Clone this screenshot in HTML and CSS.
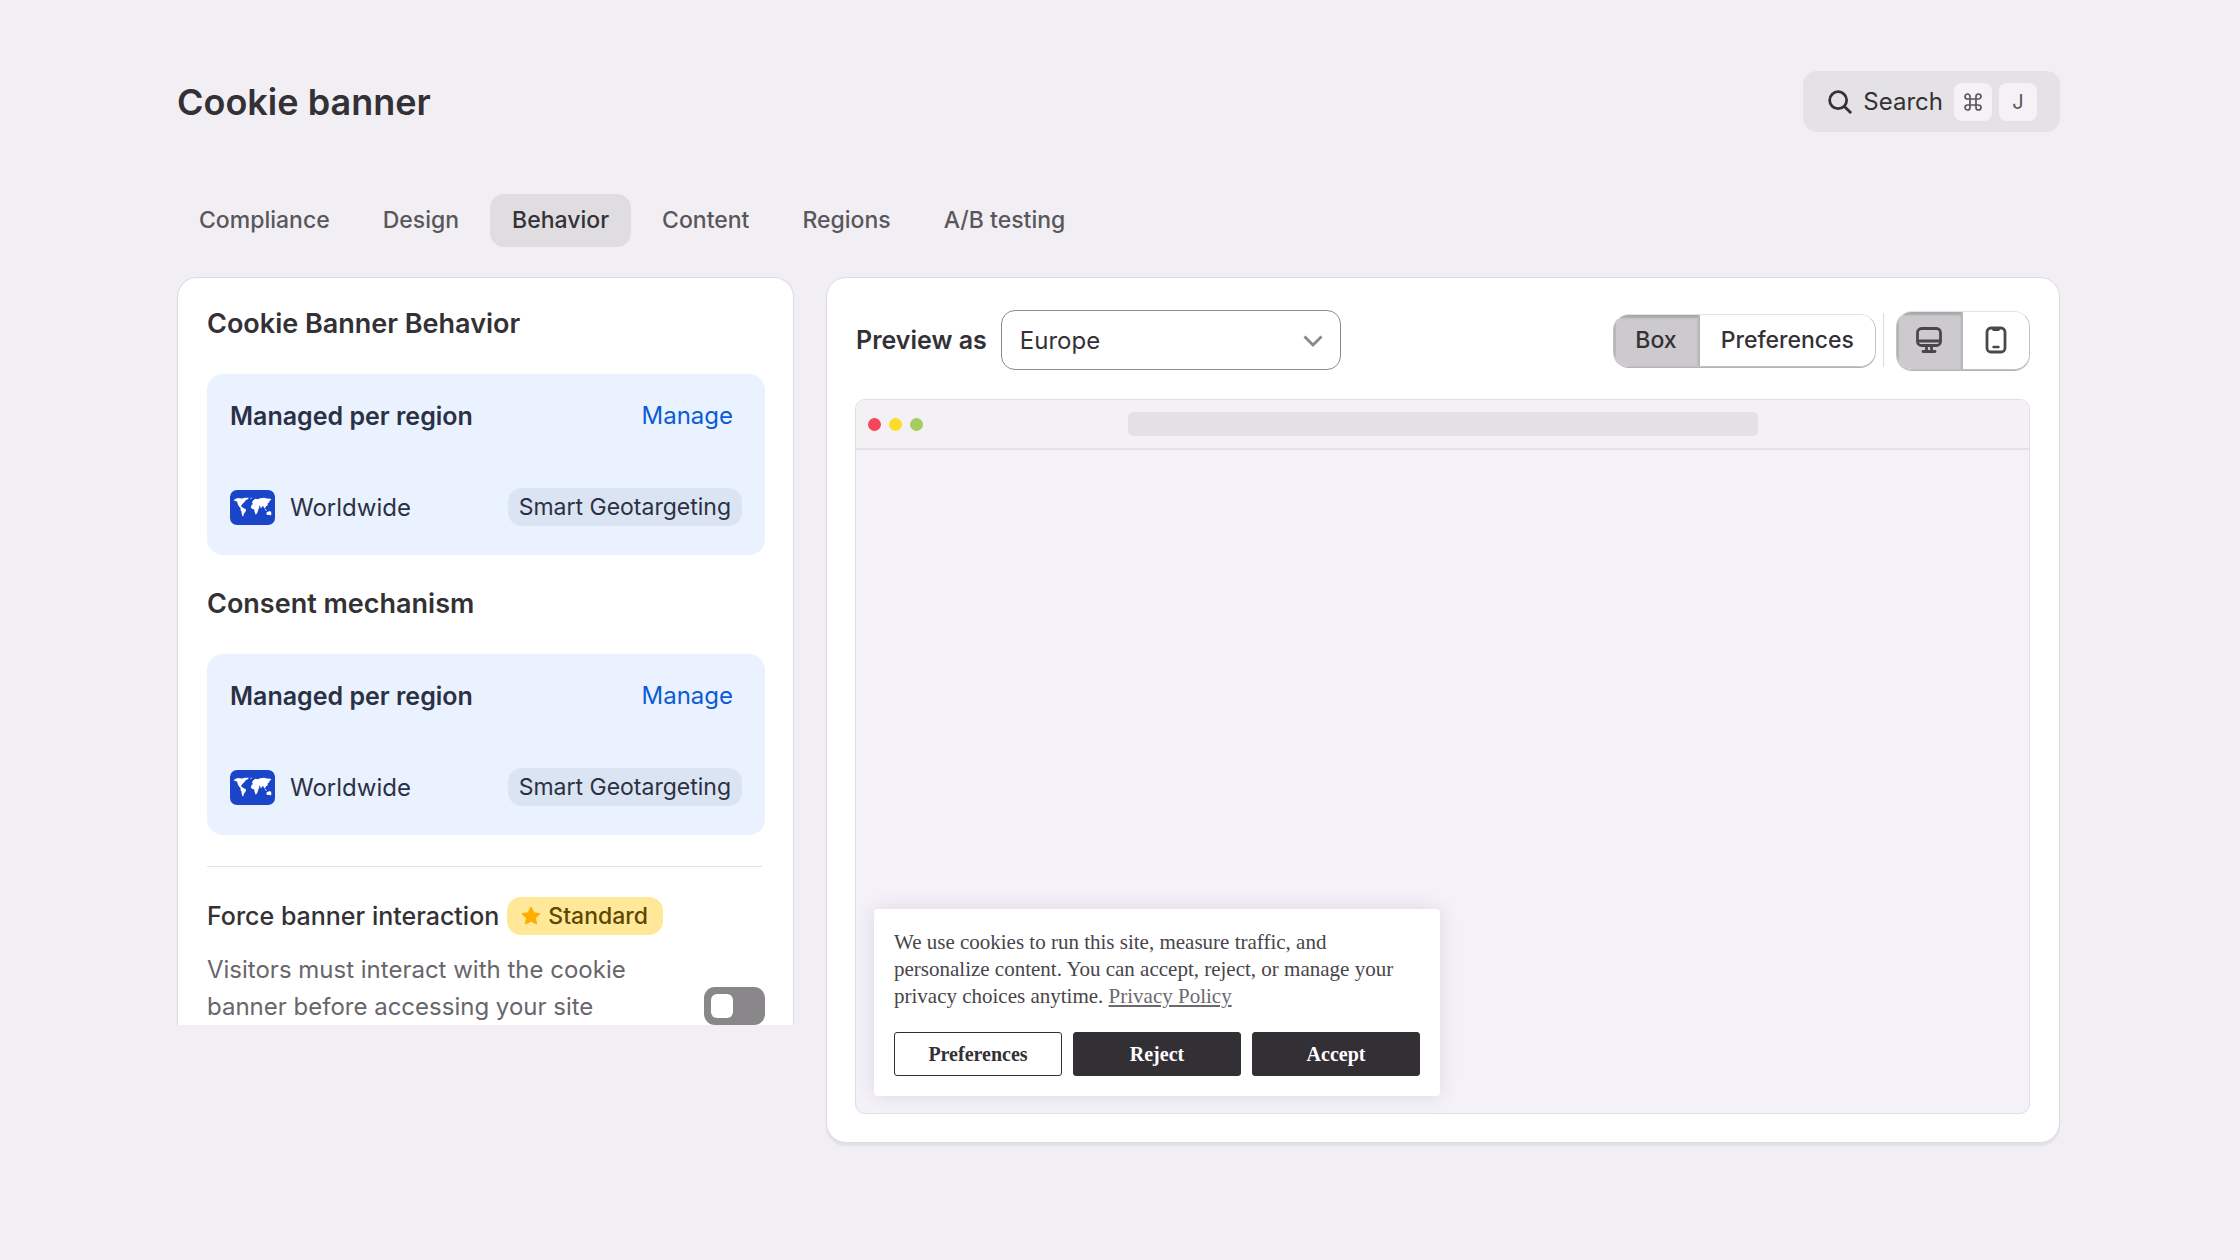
FILE: index.html
```html
<!DOCTYPE html>
<html lang="en">
<head>
	<meta charset="UTF-8">
	<meta name="viewport" content="width=device-width, initial-scale=1.0">
	<title>Cookie banner</title>
	<link rel="stylesheet" href="styles.css">
</head>
<body>
	<!-- shared world map flag -->
	<svg width="0" height="0" class="sprite" aria-hidden="true">
		<symbol id="world" viewBox="0 0 45 35">
			<rect width="45" height="35" rx="7" fill="#1b45c8"/>
			<path fill="#fff" d="M5 9l3-1 4 .4 3-.6 4 0-1.500 1.600-1.700.6-.8 1.500-1.600 1.600-1.500 1.700-.9 1.300.9 1 1.600 1 2.600 1.400-.6 2.200-1.500 1.800-.6 2.400-.8.7-.8-2.600-.3-2.400-1-1.700.1-1.800-1.600-1.500-1.200-2.400-.6-2.200-1.700-1.200-1.800.3z"/>
			<path fill="#fff" d="M22 12.500l1.200-2.200 2.300-1.500 2.500.5 2-1 4-.5 3 .6 3.500.3.800 1.300-1.800.8-.4 1.800-1.300.7-.3 2.200-1.700 1-.8 2.300-1.200-1.500-.8-1.600-1.200 1.600-.8 1.300-1-2.600-1.400-.3.900 1.600-1 1.800-.7 2.300-1 2.300-1.300.8-.9-2.600-.4-2.600-2.200-.4-1.100-1.800.7-2 1.300-1.200z"/>
			<path fill="#fff" d="M36.500 22.500l2-.9 1.700-.7 1 1.500.3 1.700-1 1.300-1.800-.7-2 .2zM35 19l2 1.300-.6.5-1.600-1zM20 8l2-.3-.7 1.300z"/>
		</symbol>
	</svg>

	<div class="page">
		<header class="header">
			<h1>Cookie banner</h1>
			<button class="search" type="button">
				<svg class="search-icon" viewBox="0 0 26 26" fill="none" stroke="#333136" stroke-width="3">
					<circle cx="11" cy="11" r="9.200"/>
					<path d="M17.500 17.500L25 25"/>
				</svg>
				Search
				<span class="keys">
					<kbd>
						<svg viewBox="0 0 18 18" width="18" height="18" fill="none" stroke="#59575c" stroke-width="1.700">
							<path d="M6 6h6v6H6zM6 6H3.500A2.500 2.500 0 1 1 6 3.500zM12 6V3.500A2.500 2.500 0 1 1 14.500 6zM12 12h2.500a2.500 2.500 0 1 1-2.500 2.500zM6 12v2.500A2.500 2.500 0 1 1 3.500 12z"/>
						</svg>
					</kbd>
					<kbd>J</kbd>
				</span>
			</button>
		</header>

		<nav class="tabs">
			<a href="#" class="tab">Compliance</a>
			<a href="#" class="tab">Design</a>
			<a href="#" class="tab active">Behavior</a>
			<a href="#" class="tab">Content</a>
			<a href="#" class="tab">Regions</a>
			<a href="#" class="tab">A/B testing</a>
		</nav>

		<main class="columns">
			<section class="panel settings">
				<h2>Cookie Banner Behavior</h2>
				<div class="region-card">
					<div class="row">
						<h3>Managed per region</h3>
						<a href="#" class="manage">Manage</a>
					</div>
					<div class="row">
						<svg class="flag"><use href="#world"/></svg>
						<span class="region">Worldwide</span>
						<span class="chip">Smart Geotargeting</span>
					</div>
				</div>

				<h2>Consent mechanism</h2>
				<div class="region-card">
					<div class="row">
						<h3>Managed per region</h3>
						<a href="#" class="manage">Manage</a>
					</div>
					<div class="row">
						<svg class="flag"><use href="#world"/></svg>
						<span class="region">Worldwide</span>
						<span class="chip">Smart Geotargeting</span>
					</div>
				</div>

				<hr>

				<div class="force-title">
					<label for="force">Force banner interaction</label>
					<span class="plan">
						<svg viewBox="0 0 20 20" width="20" height="20" fill="#ffae00" stroke="#ffae00" stroke-width="1.500" stroke-linejoin="round">
							<path d="M10 1.500l2.600 5.400 5.900.8-4.300 4.100 1.100 5.900L10 14.800l-5.300 2.900 1.100-5.900L1.500 7.700l5.900-.8z"/>
						</svg>
						Standard
					</span>
				</div>
				<div class="force-body">
					<p>Visitors must interact with the cookie banner before accessing your site</p>
					<input type="checkbox" id="force" class="toggle">
				</div>
			</section>

			<section class="panel preview">
				<div class="toolbar">
					<label for="previewAs">Preview as</label>
					<div class="select">
						<select id="previewAs">
							<option>Europe</option>
							<option>Worldwide</option>
						</select>
						<svg class="chevron" viewBox="0 0 20 12" fill="none" stroke="#88868b" stroke-width="2.800">
							<path d="M1.500 1.500L10 10l8.500-8.500"/>
						</svg>
					</div>
					<div class="segmented views">
						<button type="button" class="on">Box</button>
						<button type="button">Preferences</button>
					</div>
					<span class="divider"></span>
					<div class="segmented devices">
						<button type="button" class="on" aria-label="Desktop">
							<svg viewBox="0 0 26 28" width="26" height="28" fill="none" stroke="#49474c" stroke-width="2.800" stroke-linecap="round">
								<rect x="1.500" y="2.500" width="23" height="17" rx="4"/>
								<path d="M2 15h22M10.500 20v5M15.500 20v5M7 25.500h12"/>
							</svg>
						</button>
						<button type="button" aria-label="Mobile">
							<svg viewBox="0 0 26 28" width="26" height="28" fill="none" stroke="#49474c" stroke-width="2.800" stroke-linecap="round">
								<rect x="4" y="2" width="18" height="24" rx="4"/>
								<path d="M10.500 3.500h5"/>
								<path d="M10.500 21h5" stroke-width="2.400"/>
							</svg>
						</button>
					</div>
				</div>

				<div class="browser">
					<div class="browser-bar">
						<div class="dots"><i class="red"></i><i class="yellow"></i><i class="green"></i></div>
						<div class="address"></div>
					</div>
					<div class="viewport">
						<div class="consent">
							<p>We use cookies to run this site, measure traffic, and personalize content. You can accept, reject, or manage your privacy choices anytime. <a href="#">Privacy Policy</a></p>
							<div class="consent-actions">
								<button type="button" class="outline">Preferences</button>
								<button type="button">Reject</button>
								<button type="button">Accept</button>
							</div>
						</div>
					</div>
				</div>
			</section>
		</main>
	</div>
</body>
</html>
```
FILE: styles.css
```css
* {
	margin: 0;
	padding: 0;
	box-sizing: border-box;
}

body {
	font-family: Inter, "Liberation Sans", sans-serif;
	font-size: 24px;
	color: #333136;
	background: #f1eff3;
}

button,
select {
	font: inherit;
	color: inherit;
}

a {
	text-decoration: none;
}

.sprite {
	position: absolute;
}

.page {
	padding: 71px 180px 71px 177px;
}

/* header */
.header {
	display: flex;
	justify-content: space-between;
	align-items: center;
	margin-bottom: 62px;
}

h1 {
	font-size: 36px;
	line-height: 44px;
	font-weight: 600;
}

.search {
	display: flex;
	align-items: center;
	gap: 11px;
	height: 61px;
	padding: 0 23px 0 25px;
	border: none;
	border-radius: 14px;
	background: #e4e2e5;
}

.search-icon {
	width: 24px;
	height: 24px;
}

.keys {
	display: flex;
	gap: 7px;
}

kbd {
	display: flex;
	align-items: center;
	justify-content: center;
	width: 38px;
	height: 38px;
	border-radius: 8px;
	background: #f4f2f5;
	color: #59575c;
	font-family: inherit;
	font-size: 20px;
}

/* tabs */
.tabs {
	display: flex;
	gap: 9px;
	margin-bottom: 30px;
}

.tab {
	padding: 0 22px;
	border-radius: 14px;
	font-size: 23px;
	line-height: 53px;
	font-weight: 500;
	color: #59575c;
}

.tab.active {
	background: #dfdde0;
	color: #333136;
}

/* panels */
.columns {
	display: grid;
	grid-template-columns: 1fr 2fr;
	gap: 32px;
	align-items: start;
}

.panel {
	background: #fff;
	border: 1px solid #dddbe0;
	border-radius: 20px;
}

.settings {
	padding: 28px 28px 0 29px;
	border-bottom: none;
	border-radius: 20px 20px 0 0;
}

h2 {
	font-size: 27px;
	line-height: 36px;
	font-weight: 600;
}

.region-card {
	margin: 32px 0 31px;
	padding: 24px 23px 29px;
	border-radius: 16px;
	background: #eaf2ff;
	color: #2b3145;
}

.row {
	display: flex;
	align-items: center;
	justify-content: space-between;
}

.row + .row {
	margin-top: 54px;
}

h3 {
	font-size: 25px;
	line-height: 36px;
	font-weight: 600;
}

.manage {
	padding: 0 9px;
	line-height: 36px;
	color: #0b5cd5;
}

.flag {
	width: 45px;
	height: 35px;
}

.region {
	flex: 1;
	padding-left: 15px;
}

.chip {
	padding: 0 11px;
	border-radius: 14px;
	background: #dbe4f2;
	font-size: 23px;
	line-height: 38px;
}

hr {
	margin: 31px 3px 30px 0;
	border: none;
	border-top: 1px solid #e4e2e5;
}

.force-title {
	display: flex;
	align-items: center;
	gap: 8px;
	margin-bottom: 16px;
	font-size: 25px;
	font-weight: 500;
}

.plan {
	display: flex;
	align-items: center;
	gap: 7px;
	padding: 0 15px 0 14px;
	border-radius: 14px;
	background: #ffe998;
	color: #5e4700;
	font-size: 23px;
	line-height: 38px;
}

.force-body {
	display: flex;
	align-items: flex-end;
	justify-content: space-between;
	gap: 60px;
	color: #68666b;
	line-height: 37px;
}

.toggle {
	appearance: none;
	flex: none;
	display: flex;
	width: 61px;
	height: 38px;
	padding: 7px;
	border-radius: 11px;
	background: #89878a;
	cursor: pointer;
}

.toggle::before {
	content: "";
	width: 22px;
	height: 24px;
	border-radius: 6px;
	background: #fff;
}

.toggle:checked {
	justify-content: flex-end;
}

/* preview */
.preview {
	padding: 32px 29px 28px 28px;
	box-shadow: 0 3px 1px #e3e1e4;
}

.toolbar {
	display: flex;
	align-items: center;
	margin-bottom: 29px;
}

.toolbar label {
	padding-left: 1px;
	margin-right: 14px;
	font-size: 25px;
	font-weight: 600;
}

.select {
	position: relative;
	width: 340px;
}

.select select {
	appearance: none;
	width: 100%;
	height: 60px;
	padding: 0 18px;
	border: 1px solid #8c8a90;
	border-radius: 14px;
	background: #fff;
}

.chevron {
	position: absolute;
	right: 18px;
	top: 25px;
	width: 20px;
	height: 12px;
	pointer-events: none;
}

.segmented {
	display: flex;
	border: 1px solid #c3c1c5;
	border-top-color: #e4e2e5;
	border-radius: 16px;
	box-shadow: 0 1px 0 #b5b3b8;
	overflow: hidden;
}

.segmented button {
	border: none;
	background: #fff;
	font-size: 23px;
	font-weight: 500;
}

.segmented .on {
	background: #cccacd;
	border-right: 2px solid #b8b6ba;
	box-shadow: inset 0 3px 2px #a9a7ab, inset 2px 0 1px #b8b6ba;
}

.views {
	height: 53px;
	margin-left: auto;
}

.views button {
	padding: 0 21px;
}

.divider {
	width: 1px;
	height: 54px;
	margin: 0 12px 0 7px;
	background: #dddbe0;
}

.devices {
	height: 59px;
}

.devices button {
	display: flex;
	align-items: center;
	justify-content: center;
	width: 66px;
}

.browser {
	border: 1px solid #e0dee3;
	border-radius: 10px;
	background: #f4f1f9;
	overflow: hidden;
}

.browser-bar {
	display: grid;
	grid-template-columns: 1fr 630px 1fr;
	align-items: center;
	height: 50px;
	padding: 0 12px;
	background: #f3f1f4;
	border-bottom: 2px solid #e4e2e6;
}

.dots {
	display: flex;
	gap: 8px;
}

.dots i {
	width: 13px;
	height: 13px;
	border-radius: 50%;
}

.red {
	background: #f6465c;
}

.yellow {
	background: #fddb2b;
}

.green {
	background: #a6cc60;
}

.address {
	height: 24px;
	border-radius: 5px;
	background: #e3e1e4;
}

.viewport {
	display: flex;
	align-items: flex-end;
	min-height: 663px;
	padding: 17px 18px;
}

.consent {
	width: 566px;
	padding: 20px;
	border-radius: 4px;
	background: #fff;
	box-shadow: 0 0 20px rgba(60, 50, 80, 0.12);
	font-family: "Liberation Serif", serif;
	font-size: 21px;
}

.consent p {
	margin-bottom: 22px;
	line-height: 27px;
	color: #47454a;
}

.consent a {
	color: #6b696e;
	text-decoration: underline;
}

.consent-actions {
	display: flex;
	gap: 11px;
}

.consent-actions button {
	flex: 1;
	height: 44px;
	border: 1px solid #322f35;
	border-radius: 3px;
	background: #322f35;
	color: #fff;
	font-size: 20px;
	font-weight: 600;
}

.consent-actions .outline {
	background: #fff;
	color: #333136;
}
```
